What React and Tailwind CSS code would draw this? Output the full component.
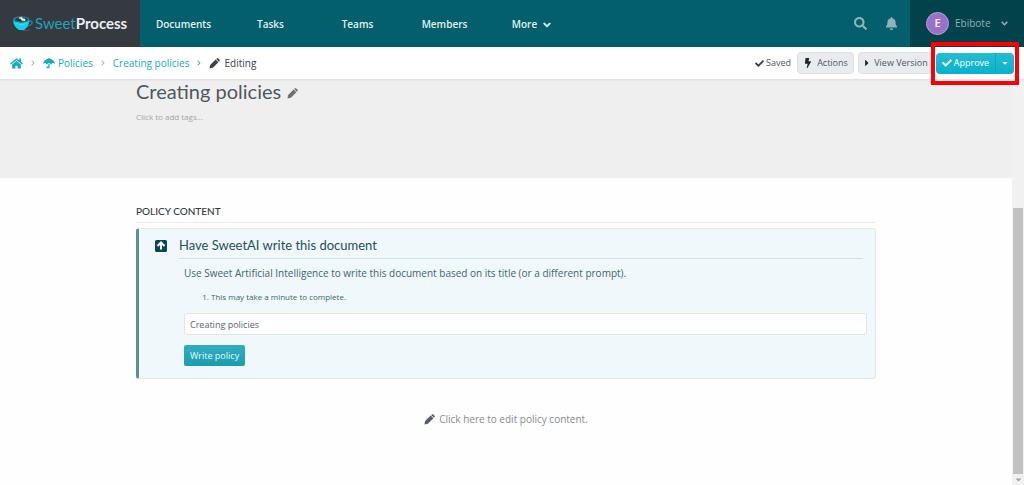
import React from "react";
import {
  FaHome, FaUmbrella, FaSearch, FaBell, FaCheck, FaBolt,
  FaCaretRight, FaCaretDown, FaChevronDown, FaChevronRight,
} from "react-icons/fa";

const navItems = ["Documents", "Tasks", "Teams", "Members"];

function CupLogo() {
  return (
    <svg className="h-[18px] w-5" viewBox="0 0 40 36" aria-hidden="true">
      <path d="M31 13c6-3 9 1 6 5-2 3-6 4-10 5" fill="none" stroke="#1d8ea3" strokeWidth="2.500" />
      <path d="M14 29c7 2 15 2 23 0-6 3-17 4-23 0z" fill="#6f6863" />
      <path d="M0 10c4 6 28 7 33 0-1 10-5 16-11 20H12C5 26 1 20 0 10z" fill="#14cfec" />
      <ellipse cx="16.500" cy="8.500" rx="16.500" ry="6" fill="#1590a5" />
      <ellipse cx="17" cy="9" rx="13" ry="4.500" fill="#3b3533" />
      <path d="M12 5l6-1 2 3 5 1-1 4-7-1-1-3-4-1z" fill="#f5f2ee" />
      <path d="M4 15c6 4 19 4 26 0-5 5-19 6-26 0z" fill="#5fe3f5" />
    </svg>
  );
}

function Pencil({ className }) {
  return (
    <svg className={className} viewBox="0 0 24 24" fill="currentColor" aria-hidden="true">
      <path d="M1 23l1.500-7.500L14.500 3.500l6 6L8.500 21.500z" />
      <path d="M15.700 2.300l1.200-1.200c1-1 2.400-1 3.400 0l2.600 2.600c1 1 1 2.400 0 3.400l-1.200 1.200z" />
    </svg>
  );
}

function Separator({ dark }) {
  return <FaChevronRight className={dark ? "size-[6px] text-[#4fa9b5]" : "size-[6px] text-[#a9b3ba]"} aria-hidden="true" />;
}

function Header() {
  return (
    <header className="flex h-[47px] shrink-0 bg-[#025f6b] font-['Open_Sans','Noto_Sans',sans-serif] text-[10px] font-semibold text-[#e3eff0]">
      <a href="#home" className="flex w-[140px] items-center gap-0.5 bg-[#343a40] pl-[13px] font-[Lato,sans-serif] text-[15px] font-normal">
        <CupLogo />
        <span className="text-[#22a3b8]">Sweet<span className="font-bold text-[#eceeef]">Process</span></span>
      </a>
      <nav className="flex">
        {navItems.map((item) => (
          <a key={item} href="#nav" className="flex w-[87px] items-center justify-center pt-0.5">{item}</a>
        ))}
        <button className="flex w-[87px] items-center justify-center gap-1.5 pt-0.5">
          More <FaChevronDown className="size-2" stroke="currentColor" strokeWidth={50} />
        </button>
      </nav>
      <div className="ml-auto flex">
        <button aria-label="Search" className="flex w-8 items-center justify-center text-[#8fb5ba]"><FaSearch className="size-[13px]" /></button>
        <button aria-label="Notifications" className="mr-1 flex w-[30px] items-center justify-center text-[#8fb5ba]"><FaBell className="size-[13px]" /></button>
        <button className="flex w-[114px] items-center bg-[#02434b] pl-4 font-normal text-[#8fb0b4]">
          <span className="flex size-[23px] items-center justify-center rounded-full border border-[#b5a5c9] bg-[#9a70cc] text-[11px] font-semibold text-white">E</span>
          <span className="ml-1.5 text-[10px]">Ebibote</span>
          <FaChevronDown className="ml-2.5 size-[7px]" stroke="currentColor" strokeWidth={50} />
        </button>
      </div>
    </header>
  );
}

function Toolbar() {
  return (
    <div className="relative z-10 flex h-8 shrink-0 items-center justify-between bg-white px-2.5 text-[10px] shadow-[0_1px_2px_rgba(0,0,0,0.08)]">
      <nav aria-label="Breadcrumb" className="flex items-center gap-[7px] text-[#12acc0]">
        <a href="#home" aria-label="Home"><FaHome className="size-[13px]" /></a>
        <Separator />
        <a href="#policies" className="flex items-center gap-[3px]"><FaUmbrella className="size-3" />Policies</a>
        <Separator />
        <a href="#policy">Creating policies</a>
        <Separator dark />
        <span className="flex items-center gap-1 font-medium text-[#3a4147]"><Pencil className="size-[11px]" />Editing</span>
      </nav>
      <div className="flex items-center gap-1 text-[9px] text-[#50575d]">
        <span className="mr-0.5 flex items-center gap-0.5"><FaCheck className="size-[9px] text-[#343a40]" />Saved</span>
        <button className="flex h-[22px] w-[57px] items-center justify-center gap-1 rounded-sm border border-[#dde1e5] bg-[#e9ecef]"><FaBolt className="size-[10px] text-[#212529]" />Actions</button>
        <button className="flex h-[22px] w-[74px] items-center justify-center gap-0.5 rounded-sm border border-[#dde1e5] bg-[#e9ecef]"><FaCaretRight className="size-[10px] text-[#212529]" />View Version</button>
        <div className="relative flex h-[21px] w-[78px] rounded-sm bg-linear-to-b from-[#22bdd2] to-[#06b2cb] text-white">
          <button className="flex flex-1 items-center justify-center gap-0.5 font-medium"><FaCheck className="size-[10px]" />Approve</button>
          <button aria-label="More approval options" className="flex w-[19px] items-center justify-center border-l border-[#12a6bb]"><FaCaretDown className="size-2" /></button>
          <span className="pointer-events-none absolute -inset-x-[5px] -top-[11px] -bottom-[11px] border-4 border-[#fb0007]" />
        </div>
      </div>
    </div>
  );
}

function AiPanel() {
  return (
    <section className="mt-[5px] rounded-[3px] border border-l-[3px] border-[#dbe8ea] border-l-[#5c8f95] bg-[#f0f8fb] pt-[7px] pr-2 pb-3 pl-4 text-[#3f676e]">
      <div className="flex gap-3">
        <svg className="mt-1 size-3" viewBox="0 0 24 24" aria-hidden="true">
          <rect width="24" height="24" rx="3" fill="#0b4751" />
          <path d="M12 19V6M5 12l7-7 7 7" fill="none" stroke="white" strokeWidth="4" />
        </svg>
        <h3 className="mr-1 flex-1 border-b border-[#d3e0e3] pb-[3px] font-[Lato,sans-serif] text-[13px] leading-[19px] text-[#25505a]">Have SweetAI write this document</h3>
      </div>
      <div className="pl-[29px]">
        <p className="mt-1.5 text-[10px] leading-4">Use Sweet Artificial Intelligence to write this document based on its title (or a different prompt).</p>
        <ol className="mt-2.5 list-decimal pl-[27px] text-[8px] leading-3"><li>This may take a minute to complete.</li></ol>
        <input aria-label="Prompt" defaultValue="Creating policies" className="mt-2.5 block h-[22px] w-full rounded-[3px] border border-[#dfe5e9] bg-white px-[5px] text-[9px] text-[#5b6269]" />
        <button className="mt-2.5 block h-[21px] rounded-xs bg-linear-to-b from-[#32adc0] to-[#179daf] px-1.5 text-[9px] text-[#e9f8fa]">Write policy</button>
      </div>
    </section>
  );
}

function Scrollbar() {
  return (
    <div className="flex w-3 shrink-0 flex-col items-center bg-[#f1f1f1] pt-[129px]" aria-hidden="true">
      <div className="w-[10px] flex-1 bg-[#c1c1c1]" />
      <FaCaretDown className="my-px size-[9px] text-[#a3a3a3]" />
    </div>
  );
}

export default function App() {
  return (
    <div className="flex h-screen flex-col overflow-hidden bg-white font-['Open_Sans','Noto_Sans',sans-serif]">
      <Header />
      <Toolbar />
      <div className="flex min-h-0 flex-1">
        <main className="min-w-0 flex-1 bg-[#fefefe]">
          <div className="h-[99px] bg-[#efefef]">
            <div className="mx-auto max-w-[740px]">
              <h1 className="flex items-center gap-1.5 font-[Lato,sans-serif] text-[20px] leading-6 text-[#50575d]">Creating policies <Pencil className="mt-1 size-[11px] text-[#6a7076]" /></h1>
              <button className="mt-2 block text-[8px] leading-3 text-[#a0a6ab]">Click to add tags...</button>
            </div>
          </div>
          <div className="mx-auto max-w-[740px] pt-[25px]">
            <h2 className="border-b border-[#ececec] pb-[3px] font-[Lato,sans-serif] text-[10px] leading-4 font-medium text-[#343a40]">POLICY CONTENT</h2>
            <AiPanel />
            <button className="mx-auto mt-8 flex items-center gap-1 text-[10px] leading-4 text-[#858b91]"><Pencil className="size-[11px] text-[#555c63]" />Click here to edit policy content.</button>
          </div>
        </main>
        <Scrollbar />
      </div>
    </div>
  );
}
